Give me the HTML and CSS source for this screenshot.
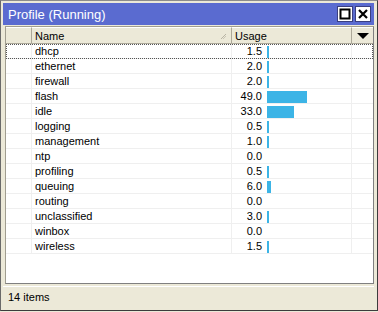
FILE: index.html
```html
<!DOCTYPE html>
<html>
<head>
<meta charset="utf-8">
<link rel="stylesheet" href="styles.css">
</head>
<body>
<div class="window">
  <div class="titlebar">
    <span class="title">Profile (Running)</span>
    <div class="tbtns">
      <span class="tbtn"><svg width="14" height="14" viewBox="0 0 14 14"><rect x="2.5" y="2.5" width="9" height="9" fill="none" stroke="#000" stroke-width="2"/></svg></span>
      <span class="tbtn"><svg width="14" height="14" viewBox="0 0 14 14"><path d="M3 3 L11 11 M11 3 L3 11" stroke="#000" stroke-width="2.2"/></svg></span>
    </div>
  </div>
  <div class="listbox">
    <div class="header">
      <div class="hcell"></div>
      <div class="hcell name">Name<svg class="sort" width="7" height="7" viewBox="0 0 7 7"><path d="M1 6 L6 1" stroke="#b8b4a4" stroke-width="1"/><path d="M3 6 L6 3" stroke="#c8c4b4" stroke-width="1"/></svg></div>
      <div class="hcell usage">Usage</div>
      <div class="hcell drop"><svg width="12" height="7" viewBox="0 0 12 7"><path d="M0 0 L12 0 L6 6 Z" fill="#000"/></svg></div>
    </div>
    <div class="rows">
      <div class="row focus"><div class="c0"></div><div class="c1">dhcp</div><div class="c2"><span class="val">1.5</span><span class="bar" style="width:2px"></span></div><div class="c3"></div></div>
      <div class="row"><div class="c0"></div><div class="c1">ethernet</div><div class="c2"><span class="val">2.0</span><span class="bar" style="width:2px"></span></div><div class="c3"></div></div>
      <div class="row"><div class="c0"></div><div class="c1">firewall</div><div class="c2"><span class="val">2.0</span><span class="bar" style="width:2px"></span></div><div class="c3"></div></div>
      <div class="row"><div class="c0"></div><div class="c1">flash</div><div class="c2"><span class="val">49.0</span><span class="bar" style="width:40px"></span></div><div class="c3"></div></div>
      <div class="row"><div class="c0"></div><div class="c1">idle</div><div class="c2"><span class="val">33.0</span><span class="bar" style="width:27px"></span></div><div class="c3"></div></div>
      <div class="row"><div class="c0"></div><div class="c1">logging</div><div class="c2"><span class="val">0.5</span><span class="bar" style="width:2px"></span></div><div class="c3"></div></div>
      <div class="row"><div class="c0"></div><div class="c1">management</div><div class="c2"><span class="val">1.0</span><span class="bar" style="width:2px"></span></div><div class="c3"></div></div>
      <div class="row"><div class="c0"></div><div class="c1">ntp</div><div class="c2"><span class="val">0.0</span></div><div class="c3"></div></div>
      <div class="row"><div class="c0"></div><div class="c1">profiling</div><div class="c2"><span class="val">0.5</span><span class="bar" style="width:2px"></span></div><div class="c3"></div></div>
      <div class="row"><div class="c0"></div><div class="c1">queuing</div><div class="c2"><span class="val">6.0</span><span class="bar" style="width:4px"></span></div><div class="c3"></div></div>
      <div class="row"><div class="c0"></div><div class="c1">routing</div><div class="c2"><span class="val">0.0</span></div><div class="c3"></div></div>
      <div class="row"><div class="c0"></div><div class="c1">unclassified</div><div class="c2"><span class="val">3.0</span><span class="bar" style="width:2px"></span></div><div class="c3"></div></div>
      <div class="row"><div class="c0"></div><div class="c1">winbox</div><div class="c2"><span class="val">0.0</span></div><div class="c3"></div></div>
      <div class="row"><div class="c0"></div><div class="c1">wireless</div><div class="c2"><span class="val">1.5</span><span class="bar" style="width:2px"></span></div><div class="c3"></div></div>
    </div>
  </div>
  <div class="status">14 items</div>
</div>
</body>
</html>
```

FILE: styles.css
```css
html, body {
  margin: 0;
  padding: 0;
  background: #ece9d8;
}
body {
  font-family: "Liberation Sans", Arial, sans-serif;
  font-size: 11px;
  color: #000;
}
.window {
  box-sizing: border-box;
  width: 378px;
  height: 311px;
  border: 1px solid #3c3c3c;
  border-top-color: #8c8c8c;
  border-left-color: #6a6a6a;
  padding: 2px 3px 2px 2px;
  display: flex;
  flex-direction: column;
  background: #ece9d8;
}
.titlebar {
  height: 22px;
  background: #5a6bd0;
  display: flex;
  align-items: center;
  justify-content: space-between;
  padding: 0 3px 0 5px;
  flex: none;
}
.title {
  color: #fff;
  font-size: 13px;
}
.tbtns {
  display: flex;
  gap: 2px;
}
.tbtn {
  width: 16px;
  height: 16px;
  box-sizing: border-box;
  background: #fff;
  border: 1px solid #3a3f80;
  display: flex;
  align-items: center;
  justify-content: center;
}
.listbox {
  margin: 1px 0 0 2px;
  height: 258px;
  box-sizing: border-box;
  border: 1px solid #a09d8f;
  border-right-color: #808080;
  border-bottom-color: #808080;
  background: #fff;
  display: flex;
  flex-direction: column;
  flex: none;
}
.header {
  display: grid;
  grid-template-columns: 26px 200px 120px 1fr;
  height: 17px;
  background: #ece9d8;
  flex: none;
}
.hcell {
  box-sizing: border-box;
  border-right: 1px solid #aca899;
  border-bottom: 1px solid #aca899;
  border-top: 1px solid #fff;
  display: flex;
  align-items: center;
  padding-left: 3px;
  padding-top: 1px;
  line-height: 14px;
}
.hcell.name {
  justify-content: space-between;
  padding-right: 4px;
}
.sort {
  display: block;
}
.hcell.drop {
  border-right: none;
  justify-content: center;
  padding-left: 0;
}
.rows {
  display: flex;
  flex-direction: column;
}
.row {
  display: grid;
  grid-template-columns: 26px 200px 120px 1fr;
  height: 15px;
  box-sizing: border-box;
  border-bottom: 1px solid #efefef;
  line-height: 15px;
}
.row.focus {
  outline: 1px dotted #555;
  outline-offset: -1px;
}
.c0, .c1, .c2 {
  border-right: 1px solid #efefef;
}
.c1 {
  padding-left: 3px;
}
.c2 {
  display: flex;
  align-items: center;
}
.val {
  width: 30px;
  text-align: right;
  flex: none;
}
.bar {
  display: block;
  height: 12px;
  margin-left: 5px;
  background: #3cb4e6;
}
.status {
  margin-top: 2px;
  height: 20px;
  line-height: 20px;
  padding-left: 5px;
  border-top: 1px solid #fff;
  font-size: 11px;
}
```
